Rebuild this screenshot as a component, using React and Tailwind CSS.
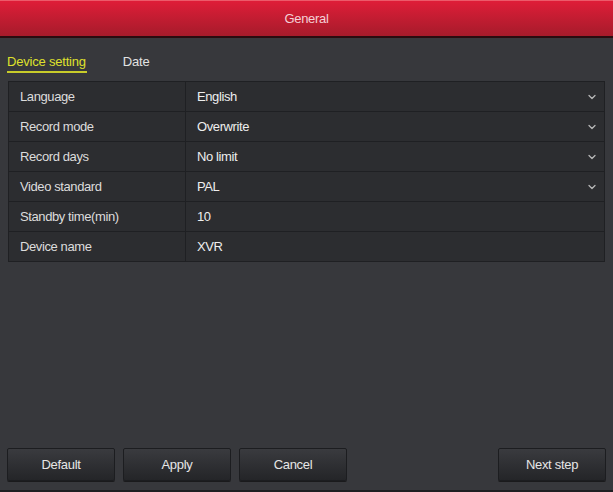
import { ChevronDown } from 'lucide-react';

const rows = [
  { label: 'Language', value: 'English', select: true },
  { label: 'Record mode', value: 'Overwrite', select: true },
  { label: 'Record days', value: 'No limit', select: true },
  { label: 'Video standard', value: 'PAL', select: true },
  { label: 'Standby time(min)', value: '10', select: false },
  { label: 'Device name', value: 'XVR', select: false },
];

function Btn({ children }) {
  return (
    <button className="w-[108px] h-[33px] rounded-[2px] border border-[#1c1d20] bg-gradient-to-b from-[#3a3b3f] to-[#242528] text-[13px] tracking-[-0.3px] text-[#e6e6e6] shadow-[0_1px_0_#1a1a1c]">
      {children}
    </button>
  );
}

export default function App() {
  return (
    <div className="w-[613px] h-[492px] bg-[#37383c] flex flex-col font-['Liberation_Sans',Arial,sans-serif] border-b-2 border-[#1e1f22]">
      <div className="h-[38px] bg-gradient-to-b from-[#df1d38] to-[#a61b2b] border-t border-[#ec5a6a] border-b-2 border-b-[#2a0c10] flex items-center justify-center text-[13px] tracking-[-0.3px] text-[#f4d0d6]">
        General
      </div>

      <div className="flex gap-[36px] px-[7px] pt-[16px] text-[13px] leading-[15px] tracking-[-0.2px]">
        <div className="text-[#dfe02c] pb-[2px] pr-[1px] border-b-2 border-[#c8cc2a]">Device setting</div>
        <div className="text-[#e2e2e2]">Date</div>
      </div>

      <div className="mx-[8px] mt-[8px] border border-[#1f2023] bg-[#1f2023] flex flex-col gap-px">
        {rows.map((r) => (
          <div key={r.label} className="flex h-[29px] gap-px">
            <div className="w-[176px] bg-[#2c2d30] flex items-center pl-[11px] text-[13px] tracking-[-0.4px] text-[#dcdcdc]">
              {r.label}
            </div>
            <div className="flex-1 bg-[#2c2d30] flex items-center pl-[11px] pr-[6px] text-[13px] tracking-[-0.4px] text-[#eeeeee]">
              <span className="flex-1">{r.value}</span>
              {r.select && <ChevronDown className="w-[12px] h-[12px] text-[#b8b8b8]" strokeWidth={2.5} />}
            </div>
          </div>
        ))}
      </div>

      <div className="flex-1" />

      <div className="flex px-[7px] pb-[9px] gap-[8px]">
        <Btn>Default</Btn>
        <Btn>Apply</Btn>
        <Btn>Cancel</Btn>
        <div className="flex-1" />
        <Btn>Next step</Btn>
      </div>
    </div>
  );
}
